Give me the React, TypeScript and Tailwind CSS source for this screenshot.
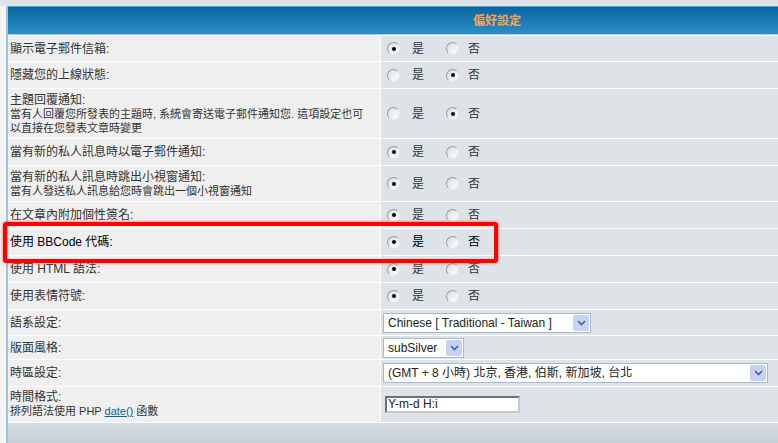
import React from "react";

const cjk = { fontFamily: '"Liberation Sans", "Noto Sans CJK TC", sans-serif' };

type Row =
  | { kind: "radio"; label: string; desc?: string; yes: boolean; h: string; hl?: boolean }
  | { kind: "select"; label: string; value: string; w: string; h: string }
  | { kind: "input"; label: string; h: string };

const rows: Row[] = [
  { kind: "radio", label: "顯示電子郵件信箱:", yes: true, h: "h-[25px]" },
  { kind: "radio", label: "隱藏您的上線狀態:", yes: false, h: "h-[26px]" },
  {
    kind: "radio",
    label: "主題回覆通知:",
    desc: "當有人回覆您所發表的主題時, 系統會寄送電子郵件通知您. 這項設定也可以直接在您發表文章時變更",
    yes: false,
    h: "h-[49px]",
  },
  { kind: "radio", label: "當有新的私人訊息時以電子郵件通知:", yes: true, h: "h-[26px]" },
  {
    kind: "radio",
    label: "當有新的私人訊息時跳出小視窗通知:",
    desc: "當有人發送私人訊息給您時會跳出一個小視窗通知",
    yes: true,
    h: "h-[35px]",
  },
  { kind: "radio", label: "在文章內附加個性簽名:", yes: true, h: "h-[26px]" },
  { kind: "radio", label: "使用 BBCode 代碼:", yes: true, h: "h-[26px]", hl: true },
  { kind: "radio", label: "使用 HTML 語法:", yes: true, h: "h-[26px]" },
  { kind: "radio", label: "使用表情符號:", yes: true, h: "h-[26px]" },
  { kind: "select", label: "語系設定:", value: "Chinese [ Traditional - Taiwan ]", w: "w-[208px]", h: "h-[25px]" },
  { kind: "select", label: "版面風格:", value: "subSilver", w: "w-[81px]", h: "h-[23px]" },
  { kind: "select", label: "時區設定:", value: "(GMT + 8 小時) 北京, 香港, 伯斯, 新加坡, 台北", w: "w-[385px]", h: "h-[26px]" },
  { kind: "input", label: "時間格式:", h: "h-[35px]" },
];

function Radio({ checked }: { checked: boolean }) {
  return (
    <span className="flex h-[13px] w-[13px] items-center justify-center rounded-full border border-[#9a9a9a] border-b-[#e8e8e8] border-r-[#e8e8e8] bg-gradient-to-br from-[#dcdcdc] to-white">
      {checked && <span className="h-[4px] w-[4px] rounded-full bg-black" />}
    </span>
  );
}

function YesNo({ yes, sharp }: { yes: boolean; sharp?: boolean }) {
  const txt = sharp ? "text-black" : "text-[#333]";
  return (
    <div className={`ml-[4px] flex items-center text-[12px] ${txt}`}>
      <Radio checked={yes} />
      <span className="ml-[12px] w-[34px]">是</span>
      <Radio checked={!yes} />
      <span className="ml-[9px]">否</span>
    </div>
  );
}

function FakeSelect({ value, w }: { value: string; w: string }) {
  return (
    <div className={`flex h-[20px] ${w} items-stretch border border-[#a5b9d1] bg-white p-px`}>
      <span className="flex-1 truncate pl-[3px] text-[12px] leading-[16px] text-[#222]">{value}</span>
      <span className="flex w-[16px] items-center justify-center rounded-[2px] bg-[#c3d4f7]">
        <svg width="9" height="6" viewBox="0 0 9 6">
          <path d="M1 1l3.5 3.5L8 1" fill="none" stroke="#4d6185" strokeWidth="1.6" />
        </svg>
      </span>
    </div>
  );
}

export default function App() {
  return (
    <div className="relative h-[443px] w-[778px] overflow-hidden bg-[#f3f3f3]" style={cjk}>
      <div className="h-[6px] bg-[#dfe3e7]" />
      <div className="ml-[6px] w-[980px] border-l-2 border-[#9cc3df] bg-white">
        <div className="flex flex-col gap-px">
          <div className="flex h-[29px] items-center justify-center border-t border-b border-t-[#5aa3d2] border-b-[#a6cde8] bg-gradient-to-b from-[#0a659f] to-[#2b8fc7]">
            <span className="text-[12px] font-bold text-[#ffa34f]">偏好設定</span>
          </div>
          {rows.map((r, i) => (
            <div key={i} className={`grid grid-cols-[372px_1fr] gap-px ${r.h}`}>
              <div
                className={`flex flex-col justify-center bg-[#efefef] pl-[2px] pr-[4px] ${
                  r.kind === "radio" && r.hl ? "text-black" : "text-[#333]"
                }`}
              >
                <div className="text-[12px] leading-[14px]">{r.label}</div>
                {r.kind === "radio" && r.desc && (
                  <div className="w-[356px] text-[11px] leading-[14px]">{r.desc}</div>
                )}
                {r.kind === "input" && (
                  <div className="text-[11px] leading-[15px]">
                    排列語法使用 PHP{" "}
                    <a className="text-[#006699] underline">date()</a> 函數
                  </div>
                )}
              </div>
              <div className="flex items-center bg-[#dee3e7] px-[2px]">
                {r.kind === "radio" && <YesNo yes={r.yes} sharp={r.hl} />}
                {r.kind === "select" && <FakeSelect value={r.value} w={r.w} />}
                {r.kind === "input" && (
                  <div className="ml-[2px] h-[17px] w-[135px] border-2 border-[#707070] border-b-[#c8c8c8] border-r-[#c8c8c8] bg-white pl-px text-[12px] leading-[13px] text-[#222]">
                    Y-m-d H:i
                  </div>
                )}
              </div>
            </div>
          ))}
          <div className="h-[22px] bg-gradient-to-b from-[#d6dde4] to-[#c5cdd6]" />
        </div>
      </div>
      <div className="pointer-events-none absolute left-[3px] top-[222px] h-[41px] w-[495px] rounded-[3px] border-[4px] border-[#ff0000] shadow-[0_0_3px_#ff4040]" />
    </div>
  );
}
